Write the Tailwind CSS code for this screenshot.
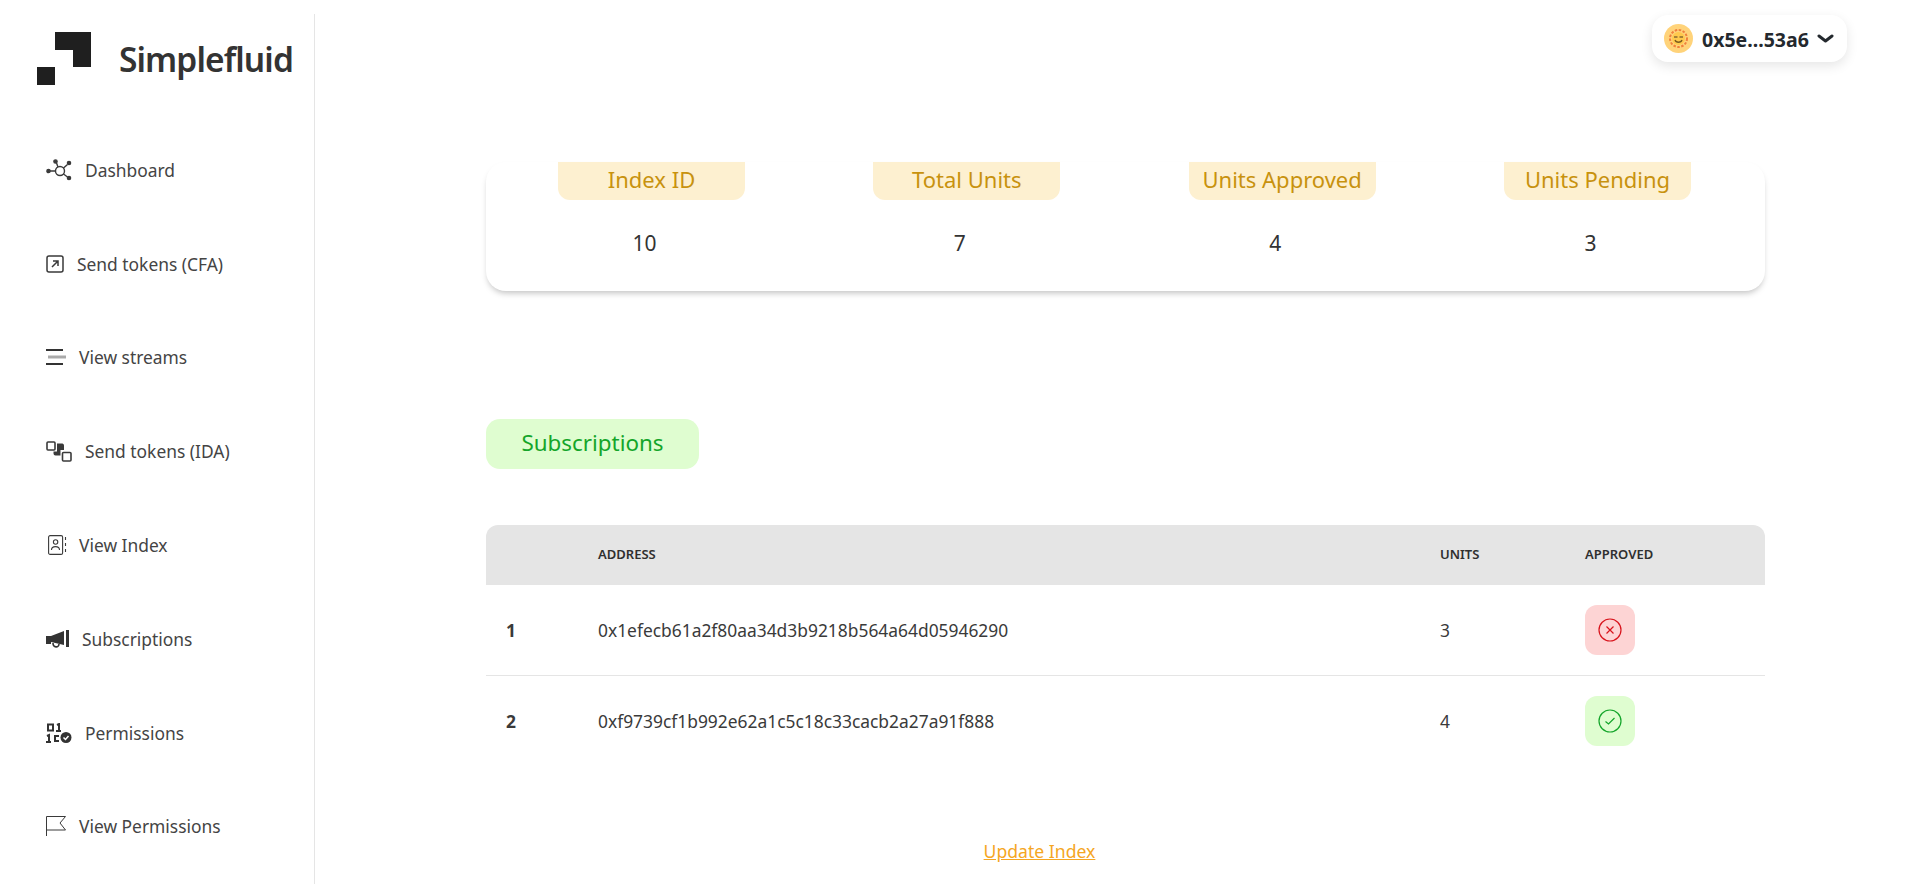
<!doctype html>
<html lang="en">
<head>
<meta charset="UTF-8" />
<title>Simplefluid</title>
<script src="https://cdn.jsdelivr.net/npm/@tailwindcss/browser@4"></script>
</head>
<body class="bg-white font-['Noto_Sans',sans-serif] text-[#3a3a3a] overflow-hidden">
<div class="flex h-[884px]">
  <!-- sidebar -->
  <aside class="w-[315px] shrink-0 mt-[14px] border-r border-[#e5e5e5]">
    <div class="flex items-center h-[109px] pl-[37px] pb-[24px]">
      <svg width="54" height="54" viewBox="0 0 54 54" class="mt-[4px]">
        <path d="M18 0H54V35H36V18H18Z M0 35H18V53H0Z" fill="#1f1f1f"/>
      </svg>
      <span class="ml-[28px] mt-[5px] text-[33.5px] font-semibold tracking-[-0.9px] text-[#333]">Simplefluid</span>
    </div>
    <nav class="text-[17.4px] text-[#444]">
      <a class="flex items-center h-[93.8px] pl-[46px]">
        <svg width="26" height="22" viewBox="0 0 26 22" class="mr-[13px]" fill="#3a3a3a" stroke="#3a3a3a" stroke-width="1.4">
          <circle cx="2.5" cy="12" r="1.6"/><circle cx="9.5" cy="2.5" r="1.6"/><circle cx="23" cy="4" r="1.6"/><circle cx="23" cy="19" r="1.6"/>
          <circle cx="14" cy="12" r="4.5" fill="none"/>
          <path d="M4 12H9.5M10.5 4L12 8M17.5 9L21.5 5.5M17.5 15L21.5 18" fill="none"/>
        </svg>
        Dashboard
      </a>
      <a class="flex items-center h-[93.8px] pl-[46px]">
        <svg width="18" height="18" viewBox="0 0 18 18" class="mr-[13px]" fill="none" stroke="#3a3a3a" stroke-width="1.5">
          <rect x="1" y="1" width="16" height="16" rx="2"/>
          <path d="M6 12L12 6M7 6H12V11"/>
        </svg>
        Send tokens (CFA)
      </a>
      <a class="flex items-center h-[93.8px] pl-[46px]">
        <svg width="20" height="16" viewBox="0 0 20 16" class="mr-[13px]" fill="none" stroke-width="2">
          <path d="M0 1H17M0 15H17" stroke="#333"/><path d="M2 8H20" stroke="#aaa" stroke-width="3"/>
        </svg>
        View streams
      </a>
      <a class="flex items-center h-[93.8px] pl-[46px]">
        <svg width="26" height="21" viewBox="0 0 26 21" class="mr-[13px]" fill="none" stroke="#3a3a3a" stroke-width="1.6">
          <rect x="1" y="1" width="8" height="8" rx="1"/><rect x="16.5" y="11.5" width="8.5" height="8.5" rx="1"/>
          <path d="M11 2.5H16.5A2 2 0 0 1 18 4.5V9H14.5V14.5H9.5A2 2 0 0 1 7.5 12.5V10.5H11Z" fill="#3a3a3a" stroke="none"/>
        </svg>
        Send tokens (IDA)
      </a>
      <a class="flex items-center h-[93.8px] pl-[48px]">
        <svg width="19" height="20" viewBox="0 0 19 20" class="mr-[12px]" fill="none" stroke="#3a3a3a" stroke-width="1.1">
          <rect x="0.6" y="0.6" width="14" height="18.8" rx="1.5"/>
          <circle cx="7.6" cy="7" r="2.2"/><path d="M3.5 15C3.5 10.5 11.5 10.5 11.5 15"/>
          <path d="M17.5 2V5M17.5 8V11M17.5 14V17"/>
        </svg>
        View Index
      </a>
      <a class="flex items-center h-[93.8px] pl-[46px]">
        <svg width="23" height="18" viewBox="0 0 23 18" class="mr-[13px]" fill="#333">
          <path d="M0 6H5L18 1V15L5 12V14H0Z"/><path d="M7 13C7 18 13 18 13 14" fill="none" stroke="#333" stroke-width="1.6"/>
          <rect x="20" y="0" width="3" height="17"/>
        </svg>
        Subscriptions
      </a>
      <a class="flex items-center h-[93.8px] pl-[46px]">
        <svg width="26" height="20" viewBox="0 0 26 20" class="mr-[13px]" fill="none" stroke="#333" stroke-width="2">
          <rect x="2" y="1.5" width="5" height="6"/><path d="M11 2L13 1V8M10 8H15"/>
          <path d="M1 13L3 12V19M0 19H5M13 13H9V18H13"/>
          <circle cx="20" cy="14.5" r="5.5" fill="#333" stroke="none"/>
          <path d="M17.5 14.5L19.5 16.5L22.5 13" stroke="#fff" stroke-width="1.5"/>
        </svg>
        Permissions
      </a>
      <a class="flex items-center h-[93.8px] pl-[46px]">
        <svg width="20" height="20" viewBox="0 0 20 20" class="mr-[13px]" fill="none" stroke="#3a3a3a" stroke-width="1">
          <path d="M0.5 20V0.5H19.5L14 7L19.5 14H0.5"/>
        </svg>
        View Permissions
      </a>
    </nav>
  </aside>

  <!-- main -->
  <main class="flex-1 min-w-0">
    <header class="flex justify-end pt-[15px] pr-[73px]">
      <button class="flex items-center h-[47px] w-[195px] pl-[12px] rounded-[16px] bg-white shadow-[0_4px_12px_rgba(0,0,0,0.1)]">
        <span class="flex items-center justify-center w-[29px] h-[29px] rounded-full bg-[#ffd37a]">
          <svg width="19" height="19" viewBox="0 0 19 19">
            <circle cx="9.5" cy="9.5" r="8.5" fill="none" stroke="#f0803c" stroke-width="2" stroke-dasharray="2.5 1.5"/>
            <circle cx="9.5" cy="9.5" r="6.5" fill="#ffc94d"/>
            <path d="M5 8H8.5M10.5 8H14" stroke="#8a6a30" stroke-width="1.5"/>
            <path d="M6 11C7 14 12 14 13 11" fill="none" stroke="#7a5a20" stroke-width="1.3"/>
          </svg>
        </span>
        <span class="ml-[9px] mt-[3px] text-[19.5px] font-bold text-[#24292e]">0x5e...53a6</span>
        <svg width="17" height="10" viewBox="0 0 17 10" class="ml-[8px]" fill="none" stroke="#24292e" stroke-width="3" stroke-linecap="round" stroke-linejoin="round">
          <path d="M2 2L8.5 7L15 2"/>
        </svg>
      </button>
    </header>

    <section class="ml-[171px] mr-[155px]">
      <div class="flex justify-between h-[129px] mt-[100px] pl-[72px] pr-[74px] rounded-[20px] bg-white shadow-[0_4px_6px_-2px_rgba(0,0,0,0.25)]">
        <div class="w-[187px]">
          <div class="flex items-center justify-center h-[38px] pb-[3px] rounded-b-[12px] bg-[#fdf0d0] text-[22px] text-[#c8920e]">Index ID</div>
          <div class="mt-[28px] pr-[14px] text-center text-[21px] text-[#333]">10</div>
        </div>
        <div class="w-[187px]">
          <div class="flex items-center justify-center h-[38px] pb-[3px] rounded-b-[12px] bg-[#fdf0d0] text-[22px] text-[#c8920e]">Total Units</div>
          <div class="mt-[28px] pr-[14px] text-center text-[21px] text-[#333]">7</div>
        </div>
        <div class="w-[187px]">
          <div class="flex items-center justify-center h-[38px] pb-[3px] rounded-b-[12px] bg-[#fdf0d0] text-[22px] text-[#c8920e]">Units Approved</div>
          <div class="mt-[28px] pr-[14px] text-center text-[21px] text-[#333]">4</div>
        </div>
        <div class="w-[187px]">
          <div class="flex items-center justify-center h-[38px] pb-[3px] rounded-b-[12px] bg-[#fdf0d0] text-[22px] text-[#c8920e]">Units Pending</div>
          <div class="mt-[28px] pr-[14px] text-center text-[21px] text-[#333]">3</div>
        </div>
      </div>

      <div class="flex items-center justify-center w-[213px] h-[50px] mt-[128px] pb-[3px] rounded-[14px] bg-[#dffdd0] text-[22.4px] text-[#14a52a]">Subscriptions</div>

      <table class="w-full mt-[56px] table-fixed border-collapse">
        <thead>
          <tr class="h-[60px] bg-[#e5e5e5] text-left text-[13px] text-[#2f2f2f]">
            <th class="w-[112px] rounded-tl-[12px]"></th>
            <th class="w-[842px] font-semibold">ADDRESS</th>
            <th class="w-[145px] font-semibold">UNITS</th>
            <th class="rounded-tr-[12px] font-semibold">APPROVED</th>
          </tr>
        </thead>
        <tbody class="text-[17.4px] text-[#3a3a3a]">
          <tr class="h-[90px] border-b border-[#e5e5e5]">
            <td class="pl-[20px] font-bold">1</td>
            <td>0x1efecb61a2f80aa34d3b9218b564a64d05946290</td>
            <td>3</td>
            <td>
              <span class="flex items-center justify-center w-[50px] h-[50px] rounded-[12px] bg-[#fdd4d4]">
                <svg width="24" height="24" viewBox="0 0 24 24" fill="none" stroke="#d8141c" stroke-width="1.2">
                  <circle cx="12" cy="12" r="11"/><path d="M8.5 8.5L15.5 15.5M15.5 8.5L8.5 15.5"/>
                </svg>
              </span>
            </td>
          </tr>
          <tr class="h-[91px]">
            <td class="pl-[20px] font-bold">2</td>
            <td>0xf9739cf1b992e62a1c5c18c33cacb2a27a91f888</td>
            <td>4</td>
            <td>
              <span class="flex items-center justify-center w-[50px] h-[50px] rounded-[12px] bg-[#dffdd0]">
                <svg width="24" height="24" viewBox="0 0 24 24" fill="none" stroke="#14a52a" stroke-width="1.2">
                  <circle cx="12" cy="12" r="11"/><path d="M7.5 12.5L10.5 15L16.5 9"/>
                </svg>
              </span>
            </td>
          </tr>
        </tbody>
      </table>

      <div class="mt-[72px] pr-[172px] text-center">
        <a class="text-[17.6px] text-[#f5a623] underline">Update Index</a>
      </div>
    </section>
  </main>
</div>
</body>
</html>
